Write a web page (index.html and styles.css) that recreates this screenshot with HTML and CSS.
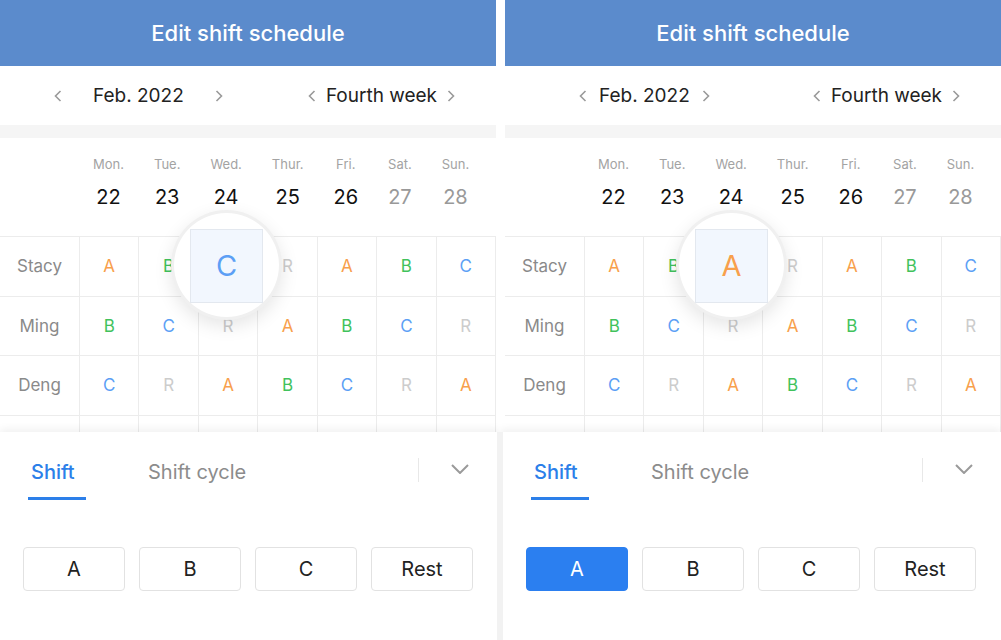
FILE: index.html
```html
<!DOCTYPE html>
<html lang="en">
<head>
<meta charset="utf-8">
<title>Edit shift schedule</title>
<link rel="stylesheet" href="styles.css">
</head>
<body>
<div class="screens">

  <section class="screen screen-left">
    <div class="top">
      <header class="header">Edit shift schedule</header>
      <nav class="nav">
        <div class="nav-group month">
          <svg class="chev" viewBox="0 0 8 12"><path d="M6.5 1 L1.5 6 L6.5 11"/></svg>
          <span class="nav-text">Feb. 2022</span>
          <svg class="chev" viewBox="0 0 8 12"><path d="M1.5 1 L6.5 6 L1.5 11"/></svg>
        </div>
        <div class="nav-group week">
          <svg class="chev" viewBox="0 0 8 12"><path d="M6.5 1 L1.5 6 L6.5 11"/></svg>
          <span class="nav-text">Fourth week</span>
          <svg class="chev" viewBox="0 0 8 12"><path d="M1.5 1 L6.5 6 L1.5 11"/></svg>
        </div>
      </nav>
      <div class="band"></div>
      <div class="days">
        <div class="day"><span class="wd">Mon.</span><span class="dt">22</span></div>
        <div class="day"><span class="wd">Tue.</span><span class="dt">23</span></div>
        <div class="day"><span class="wd">Wed.</span><span class="dt">24</span></div>
        <div class="day"><span class="wd">Thur.</span><span class="dt">25</span></div>
        <div class="day"><span class="wd">Fri.</span><span class="dt">26</span></div>
        <div class="day weekend"><span class="wd">Sat.</span><span class="dt">27</span></div>
        <div class="day weekend"><span class="wd">Sun.</span><span class="dt">28</span></div>
      </div>
      <div class="grid-wrap">
        <div class="grid">
          <div class="cell name">Stacy</div>
          <div class="cell s-a">A</div><div class="cell s-b">B</div><div class="cell"></div><div class="cell s-r">R</div><div class="cell s-a">A</div><div class="cell s-b">B</div><div class="cell s-c">C</div>
          <div class="cell name">Ming</div>
          <div class="cell s-b">B</div><div class="cell s-c">C</div><div class="cell s-r">R</div><div class="cell s-a">A</div><div class="cell s-b">B</div><div class="cell s-c">C</div><div class="cell s-r">R</div>
          <div class="cell name">Deng</div>
          <div class="cell s-c">C</div><div class="cell s-r">R</div><div class="cell s-a">A</div><div class="cell s-b">B</div><div class="cell s-c">C</div><div class="cell s-r">R</div><div class="cell s-a">A</div>
          <div class="cell name"></div>
          <div class="cell"></div><div class="cell"></div><div class="cell"></div><div class="cell"></div><div class="cell"></div><div class="cell"></div><div class="cell"></div>
        </div>
      </div>
      <div class="magnifier"><div class="lens-cell s-c">C</div></div>
    </div>
    <div class="sheet">
      <div class="tabs">
        <div class="tab active">Shift</div>
        <div class="tab">Shift cycle</div>
        <div class="tab-divider"></div>
        <svg class="chev-down" viewBox="0 0 18 10"><path d="M1 1 L9 9 L17 1"/></svg>
      </div>
      <div class="buttons">
        <button class="btn">A</button>
        <button class="btn">B</button>
        <button class="btn">C</button>
        <button class="btn">Rest</button>
      </div>
    </div>
  </section>

  <section class="screen screen-right">
    <div class="top">
      <header class="header">Edit shift schedule</header>
      <nav class="nav">
        <div class="nav-group month">
          <svg class="chev" viewBox="0 0 8 12"><path d="M6.5 1 L1.5 6 L6.5 11"/></svg>
          <span class="nav-text">Feb. 2022</span>
          <svg class="chev" viewBox="0 0 8 12"><path d="M1.5 1 L6.5 6 L1.5 11"/></svg>
        </div>
        <div class="nav-group week">
          <svg class="chev" viewBox="0 0 8 12"><path d="M6.5 1 L1.5 6 L6.5 11"/></svg>
          <span class="nav-text">Fourth week</span>
          <svg class="chev" viewBox="0 0 8 12"><path d="M1.5 1 L6.5 6 L1.5 11"/></svg>
        </div>
      </nav>
      <div class="band"></div>
      <div class="days">
        <div class="day"><span class="wd">Mon.</span><span class="dt">22</span></div>
        <div class="day"><span class="wd">Tue.</span><span class="dt">23</span></div>
        <div class="day"><span class="wd">Wed.</span><span class="dt">24</span></div>
        <div class="day"><span class="wd">Thur.</span><span class="dt">25</span></div>
        <div class="day"><span class="wd">Fri.</span><span class="dt">26</span></div>
        <div class="day weekend"><span class="wd">Sat.</span><span class="dt">27</span></div>
        <div class="day weekend"><span class="wd">Sun.</span><span class="dt">28</span></div>
      </div>
      <div class="grid-wrap">
        <div class="grid">
          <div class="cell name">Stacy</div>
          <div class="cell s-a">A</div><div class="cell s-b">B</div><div class="cell"></div><div class="cell s-r">R</div><div class="cell s-a">A</div><div class="cell s-b">B</div><div class="cell s-c">C</div>
          <div class="cell name">Ming</div>
          <div class="cell s-b">B</div><div class="cell s-c">C</div><div class="cell s-r">R</div><div class="cell s-a">A</div><div class="cell s-b">B</div><div class="cell s-c">C</div><div class="cell s-r">R</div>
          <div class="cell name">Deng</div>
          <div class="cell s-c">C</div><div class="cell s-r">R</div><div class="cell s-a">A</div><div class="cell s-b">B</div><div class="cell s-c">C</div><div class="cell s-r">R</div><div class="cell s-a">A</div>
          <div class="cell name"></div>
          <div class="cell"></div><div class="cell"></div><div class="cell"></div><div class="cell"></div><div class="cell"></div><div class="cell"></div><div class="cell"></div>
        </div>
      </div>
      <div class="magnifier"><div class="lens-cell s-a">A</div></div>
    </div>
    <div class="sheet">
      <div class="tabs">
        <div class="tab active">Shift</div>
        <div class="tab">Shift cycle</div>
        <div class="tab-divider"></div>
        <svg class="chev-down" viewBox="0 0 18 10"><path d="M1 1 L9 9 L17 1"/></svg>
      </div>
      <div class="buttons">
        <button class="btn selected">A</button>
        <button class="btn">B</button>
        <button class="btn">C</button>
        <button class="btn">Rest</button>
      </div>
    </div>
  </section>

</div>
</body>
</html>
```

FILE: styles.css
```css
* { box-sizing: border-box; }

html, body {
  margin: 0;
  padding: 0;
  background: #ffffff;
}

body {
  font-family: Inter, "Noto Sans", "Liberation Sans", sans-serif;
  width: 1001px;
  height: 640px;
  overflow: hidden;
}

.screens {
  display: grid;
  grid-template-columns: 500px 501px;
  height: 640px;
}

.screen {
  display: flex;
  flex-direction: column;
  height: 640px;
  overflow: hidden;
}

.top {
  position: relative;
  width: 496px;
  flex: 0 0 auto;
}

.screen-left .top { margin-right: 4px; }
.screen-right .top { margin-left: 5px; }

.header {
  height: 66px;
  background: #5b8bcc;
  color: #ffffff;
  font-size: 22px;
  font-weight: 500;
  display: flex;
  align-items: center;
  justify-content: center;
}

.nav {
  height: 59px;
  display: flex;
  align-items: center;
  padding-right: 41px;
}

.nav-group {
  display: flex;
  align-items: center;
}

.nav-text {
  font-size: 19px;
  color: #222222;
  line-height: 24px;
}

.chev {
  width: 8px;
  height: 12px;
  flex: 0 0 auto;
}

.chev path {
  fill: none;
  stroke: #9a9a9a;
  stroke-width: 1.6;
}

.screen-left .month { margin-left: 54px; gap: 31px; }
.screen-right .month { margin-left: 74px; gap: 12px; }

.week {
  margin-left: auto;
  gap: 10px;
}

.band {
  height: 13px;
  background: #f5f5f5;
}

.days {
  height: 98px;
  display: flex;
  gap: 30px;
  padding-left: 93px;
  padding-top: 18px;
}

.day {
  display: flex;
  flex-direction: column;
  align-items: center;
}

.wd {
  font-size: 13px;
  line-height: 16px;
  color: #a3a3a3;
}

.dt {
  font-size: 20px;
  line-height: 24px;
  margin-top: 13px;
  color: #111111;
}

.weekend .dt { color: #999999; }

.grid-wrap {
  height: 196px;
  overflow: hidden;
}

.grid {
  margin-left: -1px;
  width: 497px;
  display: grid;
  grid-template-columns: 80px repeat(7, 1fr);
  grid-auto-rows: 59.5px;
  border-left: 1px solid #ececec;
  border-top: 1px solid #ececec;
}

.cell {
  border-right: 1px solid #ececec;
  border-bottom: 1px solid #ececec;
  display: flex;
  align-items: center;
  justify-content: center;
  font-size: 17px;
}

.cell.name {
  color: #8a8a8a;
}

.s-a { color: #f8a04c; }
.s-b { color: #41c25c; }
.s-c { color: #5c9ff5; }
.s-r { color: #cccccc; }

.magnifier {
  position: absolute;
  left: 171px;
  top: 210px;
  width: 111px;
  height: 110px;
  border-radius: 50%;
  background: #ffffff;
  border: 3px solid #f0f0f0;
  box-shadow: 0 6px 18px rgba(0, 0, 0, 0.10);
  display: flex;
  align-items: center;
  justify-content: center;
  z-index: 2;
}

.lens-cell {
  width: 73px;
  height: 74px;
  margin-top: 1px;
  background: #f2f7fe;
  border: 1px solid #e3e8ef;
  display: flex;
  align-items: center;
  justify-content: center;
  font-size: 29px;
}

.sheet {
  position: relative;
  z-index: 1;
  flex: 1 1 auto;
  background: #ffffff;
  box-shadow: 0 -3px 8px rgba(0, 0, 0, 0.06);
}

.screen-left .sheet { border-right: 3px solid #f2f2f2; }
.screen-right .sheet { border-left: 3px solid #f2f2f2; }

.tabs {
  height: 68px;
  display: flex;
  align-items: flex-start;
  padding-left: 28px;
  padding-right: 28px;
}

.tab {
  height: 68px;
  padding: 28px 3px 0;
  line-height: 24px;
  font-size: 20px;
  color: #8c8c8c;
  border-bottom: 3px solid transparent;
}

.tab.active {
  width: 58px;
  color: #2c7fe9;
  font-weight: 500;
  border-bottom-color: #2c7fe9;
}

.tab + .tab { margin-left: 59px; }

.tab-divider {
  margin-left: auto;
  margin-top: 26px;
  width: 1px;
  height: 24px;
  background: #e8e8e8;
}

.chev-down {
  width: 18px;
  height: 10px;
  margin-top: 32px;
  margin-left: 32px;
}

.chev-down path {
  fill: none;
  stroke: #9a9a9a;
  stroke-width: 2;
}

.buttons {
  display: grid;
  grid-template-columns: repeat(4, 102px);
  gap: 14px;
  padding-left: 23px;
  margin-top: 47px;
}

.btn {
  height: 44px;
  border: 1px solid #e2e2e2;
  border-radius: 4px;
  background: #ffffff;
  font-family: inherit;
  font-size: 20px;
  color: #222222;
  padding: 0;
}

.btn.selected {
  background: #2b7ff0;
  border-color: #2b7ff0;
  color: #ffffff;
}
```
